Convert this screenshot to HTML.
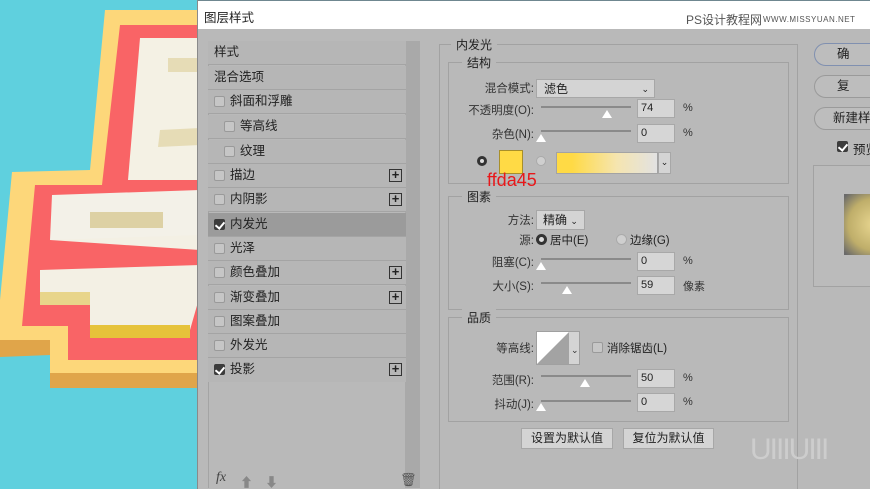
<!DOCTYPE html>
<html><head><meta charset="utf-8"><style>
*{margin:0;padding:0;box-sizing:border-box}
html,body{width:870px;height:489px;overflow:hidden}
body{position:relative;background:#5fd0de;font-family:"Liberation Sans","Noto Sans CJK SC",sans-serif;font-size:12px;color:#222;white-space:nowrap}
.a{position:absolute}
#dlg{left:197px;top:0;width:673px;height:489px;background:#b9b9b9;border-left:1px solid #8a8a8a;overflow:hidden}
#title{left:0;top:0;width:673px;height:29px;background:#fff;border-top:1px solid #6f8790}
.row{position:absolute;left:10px;width:198px;height:24px;border-bottom:1px solid #a4a4a4;background:#b6b6b6;line-height:23px;font-size:12.5px}
.sel{background:#9b9b9b}
.cb{position:absolute;left:6px;top:6px;width:11px;height:11px;border:1px solid #9a9a9a;background:#c6c6c6;border-radius:2px}
.cb.on{background:#3c3c3c;border-color:#3c3c3c}
.cb.on:after{content:"";position:absolute;left:2px;top:0px;width:4px;height:7px;border:solid #fff;border-width:0 2px 2px 0;transform:rotate(40deg)}
.plus{position:absolute;left:181px;top:5px;width:13px;height:13px;border:1px solid #333;font-size:13px;line-height:10px;text-align:center;font-weight:bold}
.fs{position:absolute;border:1px solid #a2a2a2}
.leg{position:absolute;background:#b9b9b9;padding:0 5px;font-size:12px}
.lbl{position:absolute;text-align:right;font-size:11.5px;color:#333}
.track{position:absolute;height:2px;background:#8a8a8a;width:90px}
.thumb{position:absolute;width:0;height:0;border-left:5px solid transparent;border-right:5px solid transparent;border-bottom:8px solid #fff}
.inp{position:absolute;width:38px;height:19px;background:#d6d6d6;border:1px solid #a8a8a8;font-size:11px;line-height:17px;padding-left:3px}
.unit{position:absolute;font-size:11px;color:#333}
.btn{position:absolute;background:#d4d4d4;border:1px solid #a7a7a7;text-align:center;font-size:12px;line-height:18px}
.pill{position:absolute;left:616px;width:80px;height:23px;border:1px solid #9a9a9a;border-radius:12px;background:#bdbdbd;font-size:12.5px;line-height:21px;padding-left:22px}
</style></head><body>
<svg class="a" style="left:0;top:0" width="200" height="489">
<polygon points="105,10 200,10 200,388 50,388 50,352 0,355 0,300 12,172 90,170" fill="#fdd77a"/>
<polygon points="50,373 200,373 200,388 50,388" fill="#e0a54a"/>
<polygon points="0,340 50,340 50,355 0,357" fill="#e0a54a"/>
<polygon points="120,25 200,25 200,360 68,360 68,326 22,326 35,185 102,185" fill="#f96466"/>
<polygon points="140,38 200,38 200,180 128,180" fill="#f4f1e4"/>
<polygon points="168,58 200,58 200,72 168,72" fill="#e6dcb6"/>
<polygon points="160,130 200,128 200,145 158,147" fill="#e6dcb6"/>
<polygon points="52,195 200,190 200,240 50,240" fill="#f3f1e8"/>
<polygon points="90,212 163,212 163,228 90,228" fill="#ddd1a4"/>
<polygon points="50,240 200,235 200,265 40,270 40,300 90,300 90,330 190,330 200,295 200,250" fill="#f3f0e4"/>
<polygon points="40,292 90,292 90,305 40,305" fill="#e8d58a"/>
<polygon points="90,325 190,325 190,338 90,338" fill="#e6c33a"/>
</svg>
<div id="dlg" class="a">
<div id="title" class="a"><span class="a" style="left:6px;top:6px;font-size:12.5px">图层样式</span>
<span class="a" style="left:488px;top:10px;font-size:12px;color:#555">PS设计教程网</span>
<span class="a" style="left:565px;top:14px;font-size:8px;color:#555;letter-spacing:0.5px">WWW.MISSYUAN.NET</span></div>
<div class="a" style="left:207px;top:41px;width:15px;height:447px;background:#a9a9a9"></div>
<div class="a" style="left:10px;top:41px;width:212px;height:447px;border-left:1px solid #a4a4a4"></div>
<div class="row" style="top:41px;padding-left:6px">样式</div>
<div class="row" style="top:66px;padding-left:6px">混合选项</div>
<div class="row" style="top:90px;padding-left:22px"><i class="cb"></i>斜面和浮雕</div>
<div class="row" style="top:115px;padding-left:32px"><i class="cb" style="left:16px"></i>等高线</div>
<div class="row" style="top:140px;padding-left:32px"><i class="cb" style="left:16px"></i>纹理</div>
<div class="row" style="top:164px;padding-left:22px"><i class="cb"></i>描边<b class="plus">+</b></div>
<div class="row" style="top:188px;padding-left:22px"><i class="cb"></i>内阴影<b class="plus">+</b></div>
<div class="row sel" style="top:213px;padding-left:22px"><i class="cb on"></i>内发光</div>
<div class="row" style="top:237px;padding-left:22px"><i class="cb"></i>光泽</div>
<div class="row" style="top:261px;padding-left:22px"><i class="cb"></i>颜色叠加<b class="plus">+</b></div>
<div class="row" style="top:286px;padding-left:22px"><i class="cb"></i>渐变叠加<b class="plus">+</b></div>
<div class="row" style="top:310px;padding-left:22px"><i class="cb"></i>图案叠加</div>
<div class="row" style="top:334px;padding-left:22px"><i class="cb"></i>外发光</div>
<div class="row" style="top:358px;padding-left:22px;border-bottom:none"><i class="cb on"></i>投影<b class="plus">+</b></div>
<span class="a" style="left:18px;top:470px;font-style:italic;font-family:'Liberation Serif',serif;font-size:14px;color:#444">fx</span>
<span class="a" style="left:42px;top:472px;color:#888;font-size:13px">⬆</span>
<span class="a" style="left:67px;top:472px;color:#888;font-size:13px">⬇</span>
<span class="a" style="left:202px;top:472px;color:#555;font-size:13px">🗑</span>

<div class="fs" style="left:241px;top:44px;width:359px;height:450px"></div>
<span class="leg" style="left:253px;top:36px">内发光</span>
<div class="fs" style="left:250px;top:62px;width:341px;height:122px"></div>
<span class="leg" style="left:264px;top:54px">结构</span>
<span class="lbl" style="left:240px;top:80px;width:96px">混合模式:</span>
<div class="btn" style="left:338px;top:79px;width:119px;height:19px;text-align:left;padding-left:7px">滤色<span style="position:absolute;right:5px;font-size:9px">⌄</span></div>
<span class="lbl" style="left:240px;top:102px;width:96px">不透明度(O):</span>
<div class="track" style="left:343px;top:106px"></div><div class="thumb" style="left:404px;top:110px"></div>
<div class="inp" style="left:439px;top:99px">74</div><span class="unit" style="left:485px;top:102px">%</span>
<span class="lbl" style="left:240px;top:126px;width:96px">杂色(N):</span>
<div class="track" style="left:343px;top:130px"></div><div class="thumb" style="left:338px;top:134px"></div>
<div class="inp" style="left:439px;top:124px">0</div><span class="unit" style="left:485px;top:127px">%</span>
<div class="a" style="left:279px;top:156px;width:10px;height:10px;border-radius:50%;border:3px solid #333;background:#ddd"></div>
<div class="a" style="left:301px;top:150px;width:24px;height:24px;background:#ffda45;border:1px solid #a88f2a"></div>
<div class="a" style="left:338px;top:156px;width:10px;height:10px;border-radius:50%;background:#cfcfcf;border:1px solid #aaa"></div>
<div class="a" style="left:358px;top:152px;width:102px;height:22px;background:linear-gradient(90deg,#ffda45 15%,#f5e5b0 60%,#e2e2e2);border:1px solid #a3a3a3"></div>
<div class="btn" style="left:460px;top:152px;width:13px;height:22px;font-size:9px">⌄</div>
<span class="a" style="left:289px;top:170px;color:#e8181a;font-size:18px">ffda45</span>
<div class="fs" style="left:250px;top:196px;width:341px;height:114px"></div>
<span class="leg" style="left:264px;top:188px">图素</span>
<span class="lbl" style="left:240px;top:212px;width:96px">方法:</span>
<div class="btn" style="left:338px;top:210px;width:49px;height:20px;text-align:left;padding-left:6px">精确 <span style="font-size:9px">⌄</span></div>
<span class="lbl" style="left:240px;top:232px;width:96px">源:</span>
<div class="a" style="left:338px;top:234px;width:11px;height:11px;border-radius:50%;border:3px solid #333;background:#ddd"></div>
<span class="a" style="left:352px;top:232px;font-size:11.5px">居中(E)</span>
<div class="a" style="left:418px;top:234px;width:11px;height:11px;border-radius:50%;background:#cfcfcf;border:1px solid #aaa"></div>
<span class="a" style="left:432px;top:232px;font-size:11.5px">边缘(G)</span>
<span class="lbl" style="left:240px;top:254px;width:96px">阻塞(C):</span>
<div class="track" style="left:343px;top:258px"></div><div class="thumb" style="left:338px;top:262px"></div>
<div class="inp" style="left:439px;top:252px">0</div><span class="unit" style="left:485px;top:255px">%</span>
<span class="lbl" style="left:240px;top:278px;width:96px">大小(S):</span>
<div class="track" style="left:343px;top:282px"></div><div class="thumb" style="left:364px;top:286px"></div>
<div class="inp" style="left:439px;top:276px">59</div><span class="unit" style="left:485px;top:278px">像素</span>
<div class="fs" style="left:250px;top:317px;width:341px;height:105px"></div>
<span class="leg" style="left:264px;top:309px">品质</span>
<span class="lbl" style="left:240px;top:340px;width:96px">等高线:</span>
<svg class="a" style="left:338px;top:331px" width="44" height="34"><rect x="0.5" y="0.5" width="43" height="33" fill="#d4d4d4" stroke="#a0a0a0"/><rect x="1" y="1" width="32" height="32" fill="#fff"/><polygon points="1,33 33,1 33,33" fill="#a3a3a3"/><text x="35" y="22" font-size="9" fill="#333">⌄</text></svg>
<div class="cb" style="left:394px;top:342px"></div>
<span class="a" style="left:409px;top:340px;font-size:11.5px">消除锯齿(L)</span>
<span class="lbl" style="left:240px;top:372px;width:96px">范围(R):</span>
<div class="track" style="left:343px;top:375px"></div><div class="thumb" style="left:382px;top:379px"></div>
<div class="inp" style="left:439px;top:369px">50</div><span class="unit" style="left:485px;top:372px">%</span>
<span class="lbl" style="left:240px;top:396px;width:96px">抖动(J):</span>
<div class="track" style="left:343px;top:400px"></div><div class="thumb" style="left:338px;top:403px"></div>
<div class="inp" style="left:439px;top:393px">0</div><span class="unit" style="left:485px;top:396px">%</span>
<div class="btn" style="left:323px;top:428px;width:92px;height:21px">设置为默认值</div>
<div class="btn" style="left:425px;top:428px;width:91px;height:21px">复位为默认值</div>
<span class="a" style="left:552px;top:433px;font-size:30px;color:#cdcdcd;letter-spacing:-2px">UIIIUIII</span>
<div class="pill" style="top:43px;border-color:#8090b0">确</div>
<div class="pill" style="top:75px">复</div>
<div class="pill" style="top:107px;padding-left:18px">新建样</div>
<div class="cb on" style="left:639px;top:141px"></div>
<span class="a" style="left:655px;top:139px;font-size:12.5px">预览</span>
<div class="fs" style="left:615px;top:165px;width:70px;height:122px;background:#bbb"></div>
<div class="a" style="left:646px;top:194px;width:30px;height:61px;background:radial-gradient(circle at 100% 50%,#e8d690,#bfae6a 60%,#6a6a6a 95%)"></div>
</div>
</body></html>
